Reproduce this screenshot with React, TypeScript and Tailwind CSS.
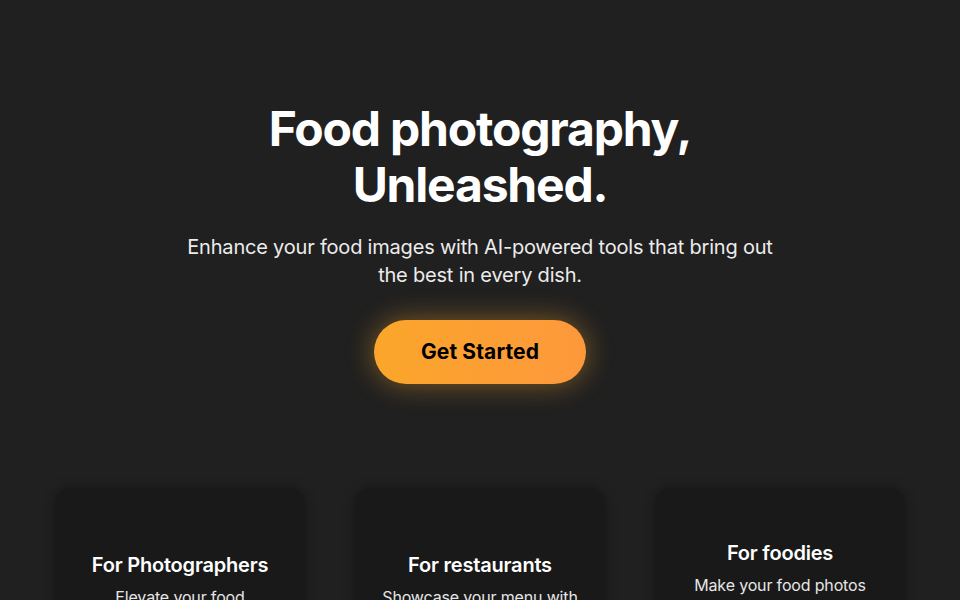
import * as React from "react";

const cards = [
  {
    title: "For Photographers",
    desc: "Elevate your food photography with pro-grade editing tools.",
  },
  {
    title: "For restaurants",
    desc: "Showcase your menu with stunning, mouth-watering images.",
  },
  {
    title: "For foodies",
    desc: "Make your food photos Instagram-worthy and share your culinary adventures with friends.",
  },
];

export default function App() {
  return (
    <div
      className="min-h-screen w-full bg-[#202020] text-white overflow-hidden"
      style={{ fontFamily: "Inter, 'Noto Sans', sans-serif" }}
    >
      <section className="flex flex-col items-center pt-[101px] text-center">
        <h1 className="text-[48px] leading-[56px] font-bold tracking-[-0.025em]">
          Food photography,
          <br />
          Unleashed.
        </h1>
        <p className="mt-[20px] max-w-[610px] text-[20px] leading-[28px] text-[#ececec] tracking-[-0.01em]">
          Enhance your food images with AI-powered tools that bring out the best
          in every dish.
        </p>
        <button className="mt-[31px] h-16 w-[212px] rounded-full bg-gradient-to-r from-[#fba62a] to-[#fd983b] text-[21px] font-bold text-black tracking-[0.005em] shadow-[0_0_28px_rgba(251,166,42,0.45)]">
          Get Started
        </button>
      </section>

      <section className="mt-[104px] grid grid-cols-3 gap-[50px] px-[55px]">
        {cards.map((c) => (
          <div
            key={c.title}
            className="flex flex-col items-center justify-center rounded-2xl bg-[#191919] px-6 py-[51px] text-center shadow-[0_0_12px_rgba(0,0,0,0.35)]"
          >
            <h3 className="text-[20px] leading-[28px] font-semibold tracking-[-0.01em]">
              {c.title}
            </h3>
            <p className="mt-1.5 text-[16px] leading-[24px] text-[#e6e6e6] tracking-[-0.01em]">
              {c.desc}
            </p>
          </div>
        ))}
      </section>
    </div>
  );
}
